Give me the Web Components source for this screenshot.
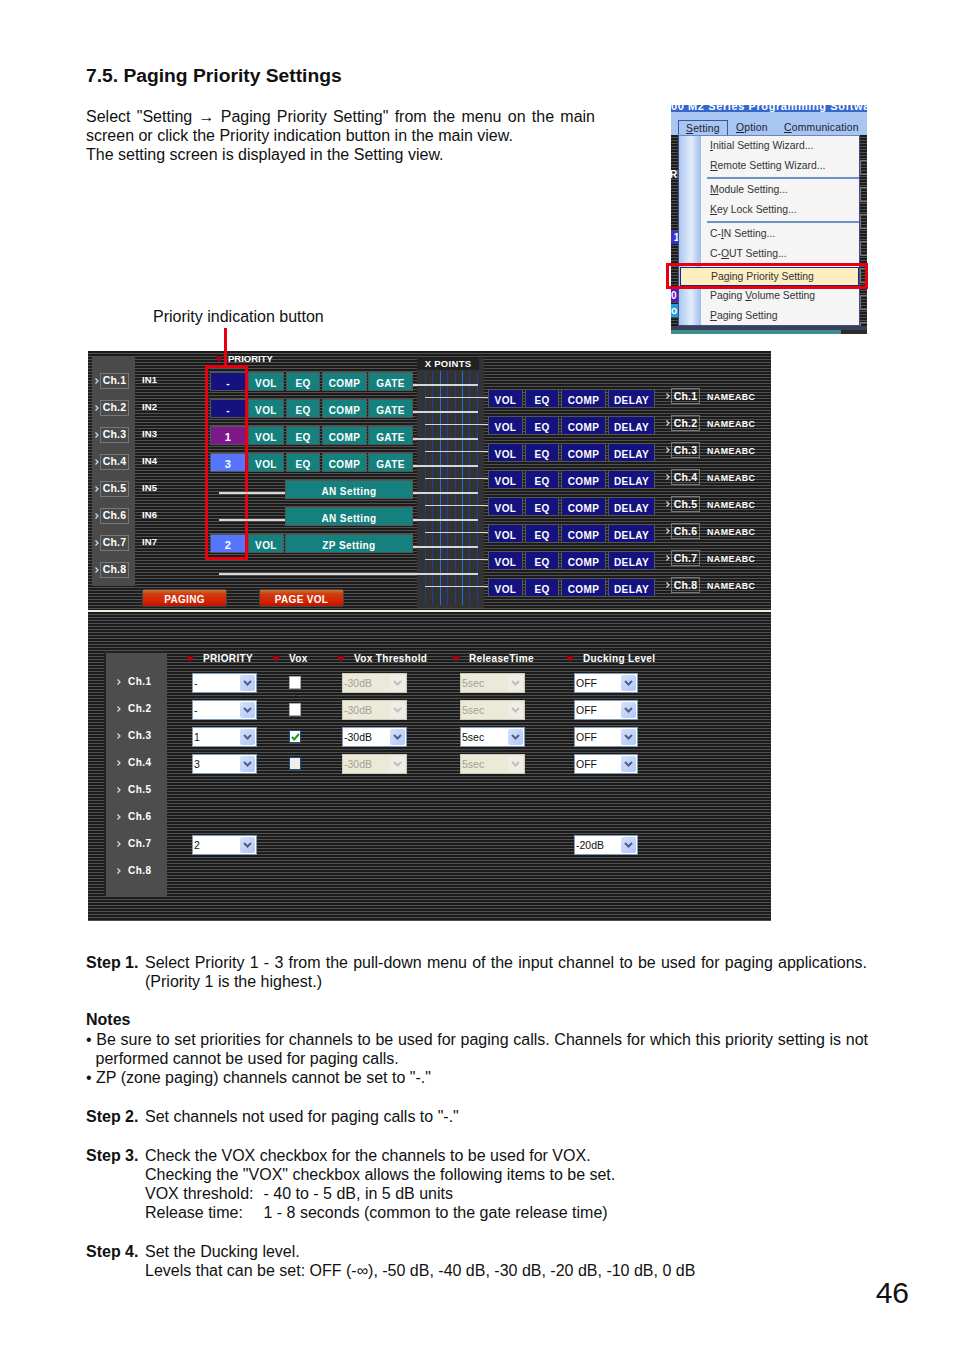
<!DOCTYPE html>
<html lang="en">
<head>
<meta charset="utf-8">
<title>7.5. Paging Priority Settings</title>
<style>
  html, body { margin: 0; background: #fff; }
  body { font: 16px/19.3px "Liberation Sans", Arial, sans-serif; color: #111; }
  b { font-weight: 700; }
  .nowrap { white-space: nowrap; }
  .fill { display: block; text-align: justify; text-align-last: justify; white-space: normal; }
  .pair { display: grid; grid-template-columns: 118.5px auto; justify-content: start; white-space: pre; }
  .hang { display: block; padding-left: 9.5px; white-space: nowrap; }
</style>
</head>
<body>
<manual-page>
  <span slot="title">7.5. Paging Priority Settings</span>
  <span slot="intro" class="fill" style="width:509px">Select "Setting → Paging Priority Setting" from the menu on the main</span>
  <span slot="intro" class="nowrap">screen or click the Priority indication button in the main view.<br>The setting screen is displayed in the Setting view.</span>
  <span slot="callout">Priority indication button</span>
  <step-block label="Step 1."><span class="fill" style="width:722px">Select Priority 1 - 3 from the pull-down menu of the input channel to be used for paging applications.</span>(Priority 1 is the highest.)</step-block>
  <step-block><b>Notes</b><span class="fill" style="width:782px">• Be sure to set priorities for channels to be used for paging calls. Channels for which this priority setting is not</span><span class="hang">performed cannot be used for paging calls.</span><span class="nowrap">• ZP (zone paging) channels cannot be set to "-."</span></step-block>
  <step-block label="Step 2.">Set channels not used for paging calls to "-."</step-block>
  <step-block label="Step 3.">Check the VOX checkbox for the channels to be used for VOX.<br>Checking the "VOX" checkbox allows the following items to be set.<div class="pair"><span>VOX threshold:</span><span>- 40 to - 5 dB, in 5 dB units</span><span>Release time:</span><span>1 - 8 seconds (common to the gate release time)</span></div></step-block>
  <step-block label="Step 4.">Set the Ducking level.<br>Levels that can be set: OFF (-∞), -50 dB, -40 dB, -30 dB, -20 dB, -10 dB, 0 dB</step-block>
  <span slot="folio">46</span>
</manual-page>

<script>
  const STRIPES = "repeating-linear-gradient(180deg,#1c1c1c 0,#1c1c1c 2px,#505050 2px,#505050 3px)";
  const UI_FONT = '"Liberation Sans", Arial, sans-serif';
  const CHANNELS = [1, 2, 3, 4, 5, 6, 7, 8];

  function define(name, css, render) {
    customElements.define(name, class extends HTMLElement {
      connectedCallback() {
        if (this.shadowRoot) return;
        this.attachShadow({ mode: "open" });
        this.shadowRoot.innerHTML = `<style>${css}</style>${render(this)}`;
      }
    });
  }

  const arrowIcon = `<svg width="4" height="6" viewBox="0 0 4 6" style="flex:none" aria-hidden="true"><path d="M0.5 0.5L3 3L0.5 5.5" fill="none" stroke="#ddd" stroke-width="1.2"/></svg>`;
  const markerIcon = `<svg width="8" height="6" viewBox="0 0 8 6" style="flex:none" aria-hidden="true"><path d="M0 0H8L4 6z" fill="#b00010"/></svg>`;

  define("manual-page", `
    :host { display: block; position: relative; box-sizing: border-box; width: 954px; height: 1351px; padding: 64px 0 0 86px; overflow: hidden; }
    h1 { margin: 0; font: 700 19.25px/23px "Liberation Sans", Arial, sans-serif; }
    .top { display: flex; height: 229px; margin-top: 18px; }
    .lead { display: flex; flex-direction: column; width: 585px; padding-top: 2px; box-sizing: border-box; line-height: 19px; }
    .callout { margin: auto 0 8px 67px; }
    .panels { margin: 17px 0 0 2px; }
    .steps { margin-top: 31.6px; width: 800px; }
    .folio { margin: -24px 45px 0 0; text-align: right; font-size: 30px; line-height: 34px; }
    .folio, .steps { display: block; }
  `, () => `
    <h1><slot name="title"></slot></h1>
    <div class="top">
      <div class="lead"><div><slot name="intro"></slot></div><div class="callout"><slot name="callout"></slot></div></div>
      <menu-shot></menu-shot>
    </div>
    <div class="panels"><matrix-panel></matrix-panel><settings-panel></settings-panel></div>
    <div class="steps"><slot></slot></div>
    <div class="folio"><slot name="folio"></slot></div>
  `);

  define("step-block", `
    :host { display: grid; grid-template-columns: 59px auto; margin-bottom: 19.3px; white-space: nowrap; }
    :host(:not([label])) { display: block; }
    .label { font-weight: 700; }
  `, (el) => `${el.hasAttribute("label") ? `<span class="label">${el.getAttribute("label")}</span>` : ""}<div><slot></slot></div>`);

  // Cropped screenshot of the Setting menu
  define("menu-shot", `
    :host { display: flex; flex-direction: column; position: relative; width: 196px; height: 229px; font: 10.4px/20px ${UI_FONT}; color: #333; }
    .title { flex: none; height: 7px; overflow: hidden; background: #3568cc; color: #fff; font: 700 11px/11px ${UI_FONT}; white-space: nowrap; letter-spacing: .6px; }
    .title span { display: block; margin-top: -4px; }
    .bar { flex: none; display: flex; align-items: flex-end; height: 23px; background: #a9c5f2; padding-left: 7px; box-sizing: border-box; white-space: nowrap; color: #223; letter-spacing: .2px; }
    .bar span { height: 15px; line-height: 16px; }
    .tab { box-sizing: border-box; width: 50px; padding-left: 7px; border: 1px solid #37589c; border-bottom: 0; }
    .opt { margin-left: 8px; width: 48px; }
    .body { flex: none; display: flex; height: 191px; }
    .side { width: 7px; background: ${STRIPES}; overflow: hidden; color: #fff; font: 700 10px/13px ${UI_FONT}; }
    .side i { display: block; font-style: normal; height: 13px; }
    .menu { width: 182px; box-sizing: border-box; background: linear-gradient(90deg,#a9c5ef 0,#e3eefc 12px,#9fbcea 22px,#f5f5f5 22px); border: 1px solid #3d4f86; border-top-color: #6d86bd; }
    .menu div { height: 20px; padding-left: 31px; white-space: nowrap; }
    .menu hr { margin: 1px 0 1px 28px; height: 2px; border: 0; background: #6f92c6; }
    .menu .on { box-sizing: border-box; margin: 3px 0 0 1px; width: 179px; height: 19px; padding-left: 30px; line-height: 18px; background: #fdeec2; border: 1px solid #1a2a78; }
    .menu div:last-child { height: 19px; }
    .foot { flex: none; height: 8px; background: linear-gradient(90deg,#3f8e90 0,#3f8e90 170px,#2b2b2b 170px); border-top: 4px solid #3a3f55; box-sizing: border-box; }
    .ring { position: absolute; left: -5px; top: 158px; width: 202px; height: 26px; box-sizing: border-box; border: 3px solid #e8000f; }
    .tick { box-sizing: border-box; width: 7px; height: 15px; margin-bottom: 12px; border: 1px solid #777; border-right: 0; }
    .rail { padding-top: 25px; box-sizing: border-box; }
  `, () => `
    <div class="title"><span>00 M2 Series Programming Softwa</span></div>
    <div class="bar"><span class="tab"><u>S</u>etting</span><span class="opt"><u>O</u>ption</span><span><u>C</u>ommunication</span></div>
    <div class="body">
      <div class="side" style="padding-top:33px">
        <i style="margin-left:-1px">RE</i>
        <i style="margin-top:50px;background:#3a33d0">&nbsp;1</i>
        <i style="margin-top:45px;background:#5a14c4">0</i>
        <i style="background:#22a0d8;margin-top:2px">o</i>
      </div>
      <div class="menu">
        <div><u>I</u>nitial Setting Wizard...</div>
        <div><u>R</u>emote Setting Wizard...</div>
        <hr>
        <div><u>M</u>odule Setting...</div>
        <div><u>K</u>ey Lock Setting...</div>
        <hr>
        <div>C-<u>I</u>N Setting...</div>
        <div>C-<u>O</u>UT Setting...</div>
        <div class="on">Pa<u>g</u>ing Priority Setting</div>
        <div>Paging <u>V</u>olume Setting</div>
        <div><u>P</u>aging Setting</div>
      </div>
      <div class="side rail"><div class="tick"></div><div class="tick"></div><div class="tick"></div><div class="tick"></div><div class="tick"></div><div class="tick"></div><div class="tick"></div></div>
    </div>
    <div class="foot"></div>
    <div class="ring"></div>
  `);

  define("flat-btn", `
    :host { display: flex; align-items: center; justify-content: center; box-sizing: border-box; height: 19px; padding-top: 4px; border: 1px solid #555; background: #15817e; color: #fff; font: 700 10px/1 ${UI_FONT}; letter-spacing: .4px; white-space: nowrap; }
    :host([tone=navy]) { background: #14127f; }
    :host([tone=purple]) { background: #7c1888; font-size: 11px; }
    :host([tone=blue]) { background: #5575ff; font-size: 11px; }
    :host([tone=red]) { height: 18px; background: linear-gradient(180deg,#c77a30 0,#cf3a10 25%,#d42400 70%,#b81800 100%); border-color: #444; border-radius: 2px; letter-spacing: .3px; }
  `, () => `<slot></slot>`);

  define("ch-badge", `
    :host { display: flex; align-items: center; gap: 1px; color: #fff; font: 700 10.5px/1 ${UI_FONT}; letter-spacing: .2px; }
    span { display: flex; align-items: center; justify-content: center; box-sizing: border-box; width: 29px; height: 16px; border: 1px solid #777; }
  `, (el) => `${arrowIcon}<span>Ch.${el.getAttribute("n")}</span>`);

  // One input channel: name, priority button, processing buttons and its wire
  define("input-row", `
    :host { display: grid; position: relative; height: 27px; grid-template-columns: 68px 36px 2px 36px 2px 34px 2px 45px 1px 45px; font: 700 9.5px/1 ${UI_FONT}; color: #fff; }
    .name { grid-column: 1; margin-top: 8px; letter-spacing: .1px; }
    flat-btn { margin-top: 5px; }
    .wire { position: absolute; z-index: 2; height: 2px; top: 17px; background: #d8d8d8; }
    .out { left: 271px; width: 65px; }
    .in { left: 77px; width: 66px; }
    .long { left: 77px; width: 259px; }
  `, (el) => {
    const type = el.getAttribute("type");
    const name = el.getAttribute("name") || "";
    const label = `<span class="name">${name}</span>`;
    const prio = `<flat-btn tone="${el.getAttribute("tone")}" style="grid-column:2">${el.getAttribute("prio")}</flat-btn>`;
    if (type === "full") return `${label}${prio}<flat-btn style="grid-column:4">VOL</flat-btn><flat-btn style="grid-column:6">EQ</flat-btn><flat-btn style="grid-column:8">COMP</flat-btn><flat-btn style="grid-column:10">GATE</flat-btn><div class="wire out"></div>`;
    if (type === "an") return `${label}<div class="wire in"></div><flat-btn style="grid-column:5 / 11;margin-left:1px">AN Setting</flat-btn><div class="wire out"></div>`;
    if (type === "zp") return `${label}${prio}<flat-btn style="grid-column:4">VOL</flat-btn><flat-btn style="grid-column:5 / 11;margin-left:1px">ZP Setting</flat-btn><div class="wire out"></div>`;
    return `${label}<div class="wire long"></div>`;
  });

  define("output-row", `
    :host { display: flex; position: relative; height: 27px; color: #fff; font: 700 8.8px/1 ${UI_FONT}; letter-spacing: .5px; }
    .btns { display: grid; grid-template-columns: 35px 34px 45px 47px; gap: 2px; width: 168px; }
    ch-badge { margin: -1px 0 0 10px; height: 16px; }
    .name { margin: 4px 0 0 7px; white-space: nowrap; }
    .wire { position: absolute; z-index: 2; left: -63px; width: 63px; top: 8px; height: 1px; background: #d8d8d8; }
  `, (el) => `
    <div class="wire"></div>
    <div class="btns"><flat-btn tone="navy">VOL</flat-btn><flat-btn tone="navy">EQ</flat-btn><flat-btn tone="navy">COMP</flat-btn><flat-btn tone="navy">DELAY</flat-btn></div>
    <ch-badge n="${el.getAttribute("n")}"></ch-badge><span class="name">NAMEABC</span>
  `);

  define("matrix-panel", `
    :host { display: flex; position: relative; width: 683px; height: 259px; background: ${STRIPES}; color: #fff; font: 700 9.5px/1 ${UI_FONT}; }
    .strip { margin: 6px 0 0 4px; width: 43px; height: 229px; background: #4a4a4a; box-sizing: border-box; padding: 10px 0 0 3px; }
    .strip ch-badge { height: 27px; }
    .inputs { position: relative; width: 275px; margin-left: 7px; }
    .head { display: flex; align-items: center; gap: 5px; height: 16px; padding-left: 73px; }
    .pager { display: flex; gap: 32px; margin-top: 6px; }
    .pager flat-btn { width: 85px; }
    .xpoints { position: relative; box-sizing: border-box; width: 67px; height: 250px; margin-top: 7px; background: #333; }
    .xhead { width: 62px; height: 12px; background: #222; text-align: center; line-height: 12px; letter-spacing: .3px; white-space: nowrap; }
    .bars { display: flex; gap: 6.4px; margin: 1px 0 0 8px; height: 234px; }
    .bars i { width: 1px; background: #1c3f9c; }
    .bars i:nth-child(3n) { background: #1f6ee8; }
    .outputs { margin: 38px 0 0 4px; }
    .ring { position: absolute; left: 63px; top: 14px; width: 43px; height: 195px; box-sizing: border-box; border: 3px solid #e8000f; }
    .stem { position: absolute; left: 82px; top: -23px; width: 3px; height: 38px; background: #e8000f; }
  `, () => {
    const rows = [
      ["IN1", "full", "-", "navy"], ["IN2", "full", "-", "navy"], ["IN3", "full", "1", "purple"], ["IN4", "full", "3", "blue"],
      ["IN5", "an"], ["IN6", "an"], ["IN7", "zp", "2", "blue"], ["", "line"],
    ];
    return `
      <div class="strip">${CHANNELS.map((n) => `<ch-badge n="${n}"></ch-badge>`).join("")}</div>
      <div class="inputs">
        <div class="head">${markerIcon}<span>PRIORITY</span></div>
        ${rows.map(([name, type, prio, tone]) => `<input-row name="${name}" type="${type}" prio="${prio || ""}" tone="${tone || ""}"></input-row>`).join("")}
        <div class="pager"><flat-btn tone="red">PAGING</flat-btn><flat-btn tone="red">PAGE VOL</flat-btn></div>
        <div class="stem"></div><div class="ring"></div>
      </div>
      <div class="xpoints"><div class="xhead">X POINTS</div><div class="bars">${"<i></i>".repeat(8)}</div></div>
      <div class="outputs">${CHANNELS.map((n) => `<output-row n="${n}"></output-row>`).join("")}</div>
    `;
  });

  define("combo-box", `
    :host { display: flex; align-items: center; justify-content: space-between; box-sizing: border-box; height: 20px; padding: 0 1px; background: #fff; border: 1px solid #7f9db9; color: #111; font: 10.5px/1 ${UI_FONT}; }
    :host([off]) { background: #ebe9d8; border-color: #cfccba; color: #a3a195; }
    .val { padding-top: 1px; }
    .btn { display: flex; align-items: center; justify-content: center; width: 15px; height: 16px; border-radius: 2px; background: linear-gradient(135deg,#d5e1fb,#b2c8f6); }
    :host([off]) .btn { background: #eeede6; }
    path { fill: none; stroke: #4d6185; stroke-width: 2; }
    :host([off]) path { stroke: #c2c1b6; }
  `, (el) => `<span class="val">${el.getAttribute("value")}</span><span class="btn"><svg width="9" height="6" viewBox="0 0 9 6" aria-hidden="true"><path d="M1 1L4.5 4.5L8 1"/></svg></span>`);

  define("vox-check", `
    :host { display: flex; align-items: center; justify-content: center; box-sizing: border-box; width: 12px; height: 13px; margin-top: 9px; background: #fff; border: 1px solid #aaa; }
    :host([state=on]) { border-color: #1c4f7e; }
    :host([state=idle]) { border-color: #1c4f7e; background: #eee; }
  `, (el) => el.getAttribute("state") === "on"
    ? `<svg width="9" height="8" viewBox="0 0 9 8" aria-hidden="true"><path d="M1 4L3.2 6.5L8 1" fill="none" stroke="#1f9a22" stroke-width="2"/></svg>`
    : "");

  // Column widths are shared by the header line and the channel rows
  const SETTING_COLUMNS = "grid-template-columns: 25px 65px 32px 12px 41px 65px 53px 65px 49px 64px;";

  define("setting-row", `
    :host { display: grid; ${SETTING_COLUMNS} height: 27px; }
    combo-box { margin-top: 6px; }
    .p { grid-column: 2; } .v { grid-column: 4; } .t { grid-column: 6; } .r { grid-column: 8; } .d { grid-column: 10; }
  `, (el) => {
    const prio = el.getAttribute("prio");
    if (prio === null) return "";
    const duck = `<combo-box class="d" value="${el.getAttribute("duck") || "OFF"}"></combo-box>`;
    const vox = el.getAttribute("vox");
    if (!vox) return `<combo-box class="p" value="${prio}"></combo-box>${duck}`;
    const off = vox === "on" ? "" : "off";
    return `<combo-box class="p" value="${prio}"></combo-box>
      <vox-check class="v" state="${vox}"></vox-check>
      <combo-box class="t" value="-30dB" ${off}></combo-box>
      <combo-box class="r" value="5sec" ${off}></combo-box>${duck}`;
  });

  define("settings-panel", `
    :host { display: flex; width: 683px; height: 309px; box-sizing: content-box; border-top: 2px solid #f0eee0; background: ${STRIPES}; color: #fff; font: 700 10px/1 ${UI_FONT}; }
    .strip { box-sizing: border-box; width: 63px; height: 245px; margin: 39px 0 0 16px; padding-top: 15px; background: #4d4d4d; border: solid #222; border-width: 2px 0 0 2px; }
    .ch { display: flex; align-items: center; gap: 7px; height: 27px; padding: 0 0 0 11px; letter-spacing: .5px; }
    .main { padding-top: 39px; }
    .heads { display: grid; ${SETTING_COLUMNS} height: 16px; align-items: center; white-space: nowrap; letter-spacing: .35px; }
    .heads span { display: flex; align-items: center; gap: 9px; }
  `, () => {
    const head = (col, text, shift) => `<span style="grid-column:${col};margin-left:${shift}px">${markerIcon}${text}</span>`;
    return `
      <div class="strip">${CHANNELS.map((n) => `<div class="ch">${arrowIcon}<span>Ch.${n}</span></div>`).join("")}</div>
      <div class="main">
        <div class="heads">${head("2", "PRIORITY", -6)}${head("3 / 5", "Vox", 15)}${head("6", "Vox Threshold", -5)}${head("8", "ReleaseTime", -8)}${head("10", "Ducking Level", -8)}</div>
        <setting-row prio="-" vox="blank"></setting-row>
        <setting-row prio="-" vox="blank"></setting-row>
        <setting-row prio="1" vox="on"></setting-row>
        <setting-row prio="3" vox="idle"></setting-row>
        <setting-row></setting-row>
        <setting-row></setting-row>
        <setting-row prio="2" duck="-20dB"></setting-row>
        <setting-row></setting-row>
      </div>
    `;
  });
</script>
</body>
</html>
